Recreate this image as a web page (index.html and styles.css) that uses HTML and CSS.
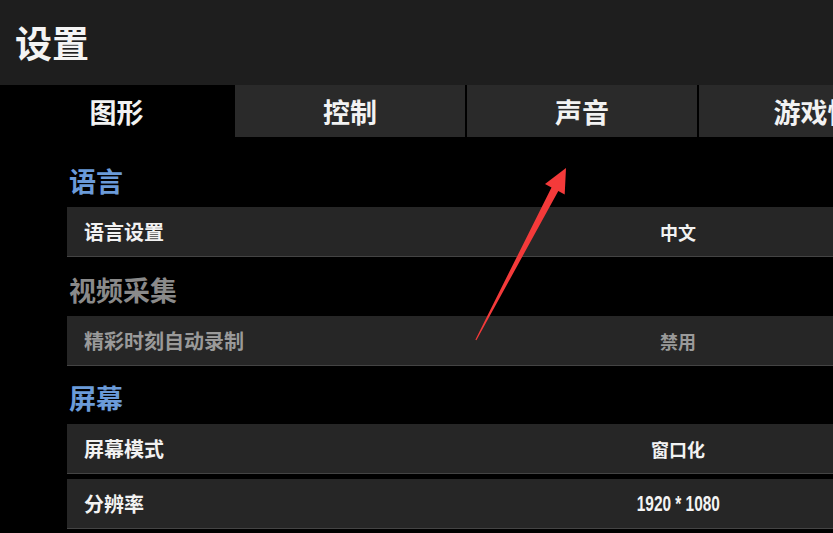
FILE: index.html
```html
<!DOCTYPE html>
<html lang="zh-CN">
<head>
    <meta charset="UTF-8">
    <meta name="viewport" content="width=device-width, initial-scale=1.0">
    <title>设置</title>
    <link rel="stylesheet" href="styles.css">
</head>
<body>

    <div class="page">
        <div class="header">
            <h1>设置</h1>
        </div>

        <div class="tabs">
            <div class="tab active">图形</div>
            <div class="tab">控制</div>
            <div class="tab">声音</div>
            <div class="tab">游戏性</div>
        </div>

        <div class="content">
            <div class="section">
                <h2 class="section-title">语言</h2>
                <div class="row">
                    <span class="label">语言设置</span>
                    <span class="value">中文</span>
                </div>
            </div>

            <div class="section disabled">
                <h2 class="section-title">视频采集</h2>
                <div class="row">
                    <span class="label">精彩时刻自动录制</span>
                    <span class="value">禁用</span>
                </div>
            </div>

            <div class="section">
                <h2 class="section-title">屏幕</h2>
                <div class="row">
                    <span class="label">屏幕模式</span>
                    <span class="value">窗口化</span>
                </div>
                <div class="row">
                    <span class="label">分辨率</span>
                    <span class="value"><span class="num">1920 * 1080</span></span>
                </div>
            </div>
        </div>

        <!-- annotation arrow pointing at the 声音 tab -->
        <svg class="arrow" width="833" height="533" viewBox="0 0 833 533">
            <polygon fill="#f43a3a" points="566,168 545,184 551.5,187.6 475.4,339.8 476.4,340.3 558.3,191 564.7,194.4"/>
        </svg>
    </div>

</body>
</html>
```

FILE: styles.css
```css
    html, body {
        margin: 0;
        padding: 0;
        background: #000;
        overflow: hidden;
    }
    body {
        font-family: "Noto Sans CJK SC", "Noto Sans", sans-serif;
        color: #fff;
        width: 833px;
        height: 533px;
    }
    .page {
        position: relative;
        width: 833px;
        height: 533px;
        overflow: hidden;
    }

    .header {
        height: 85px;
        background-color: #1e1e1e;
        display: flex;
        align-items: center;
        padding-left: 15px;
    }
    .header h1 {
        margin: 0;
        font-size: 37px;
        font-weight: bold;
        line-height: 1;
        color: #f4f4f4;
    }

    .tabs {
        display: flex;
        gap: 2px;
        width: 1000px;
        height: 52px;
        border-bottom: 1px solid #000;
    }
    .tab {
        flex: 0 0 230px;
        background-color: #2a2a2a;
        display: flex;
        align-items: center;
        justify-content: center;
        font-size: 27px;
        font-weight: bold;
        color: #f2f2f2;
    }
    .tab:first-child {
        flex-basis: 233px;
    }
    .tab.active {
        background-color: #000;
    }

    .content {
        padding: 16px 0 0 67px;
        display: flex;
        flex-direction: column;
        gap: 6px;
    }
    .section {
        display: flex;
        flex-direction: column;
        gap: 5px;
    }
    .section-title {
        margin: 0 0 -5px 0;
        height: 53px;
        line-height: 53px;
        padding-left: 2px;
        font-size: 27px;
        font-weight: bold;
        color: #6b9bd9;
    }
    .section:last-child .section-title {
        margin-top: -1px;
    }

    .row {
        display: grid;
        grid-template-columns: 456px 310px 1fr;
        align-items: center;
        width: 900px;
        height: 49px;
        background-color: #262626;
        border-bottom: 1px solid #444;
    }
    .label {
        padding-left: 17px;
        font-size: 20px;
        font-weight: bold;
        color: #f2f2f2;
    }
    .value {
        text-align: center;
        font-size: 18px;
        font-weight: bold;
        color: #f2f2f2;
    }
    .num {
        display: inline-block;
        font-family: "Liberation Sans", Arial, sans-serif;
        font-size: 22px;
        font-weight: bold;
        color: #f4f4f4;
        transform: scaleX(0.7);
    }

    .disabled .section-title {
        color: #8a8a8a;
    }
    .disabled .label,
    .disabled .value {
        color: #9a9a9a;
    }

    .arrow {
        position: absolute;
        left: 0;
        top: 0;
        pointer-events: none;
    }
```
